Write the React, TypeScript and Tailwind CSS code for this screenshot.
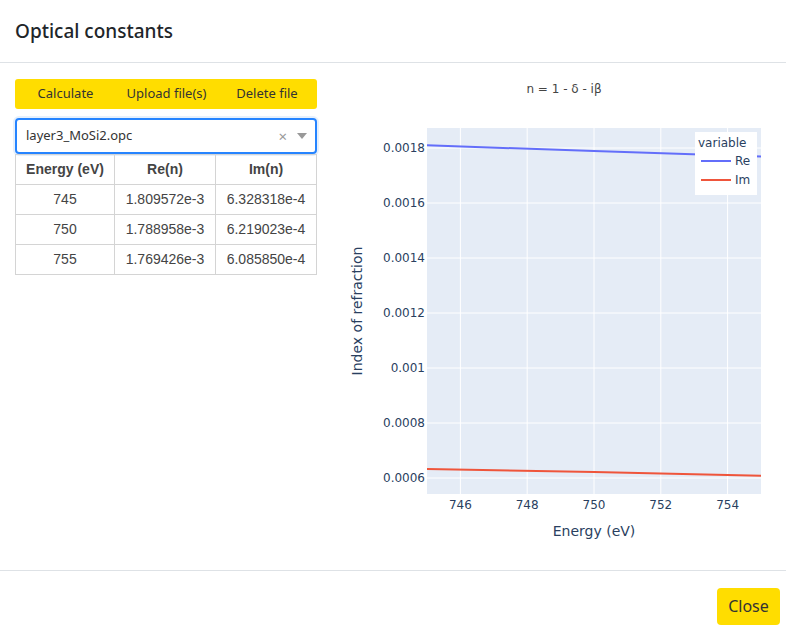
import React from 'react';

// ** data
const rows = [
  { energy: 745, re: '1.809572e-3', im: '6.328318e-4' },
  { energy: 750, re: '1.788958e-3', im: '6.219023e-4' },
  { energy: 755, re: '1.769426e-3', im: '6.085850e-4' },
];

const reVals = [1.809572e-3, 1.788958e-3, 1.769426e-3];
const imVals = [6.328318e-4, 6.219023e-4, 6.08585e-4];

// plot area in svg coordinates (svg sits at page x=330, y=63)
const PX0 = 97;
const PX1 = 431;
const PY0 = 65;
const PY1 = 431;

const xOf = (e: number) => PX0 + ((e - 745) / 10) * (PX1 - PX0);
const yOf = (v: number) => 415 - ((v - 0.0006) / 0.0001) * 27.5;

const Chart: React.FC = () => {
  const yTicks = [0.0018, 0.0016, 0.0014, 0.0012, 0.001, 0.0008, 0.0006];
  const xTicks = [746, 748, 750, 752, 754];
  const energies = [745, 750, 755];

  const line = (vals: number[]) => energies.map((e, i) => `${xOf(e)},${yOf(vals[i])}`).join(' ');

  return (
    <svg width={456} height={507} className="block" style={{ fontFamily: '"DejaVu Sans", Verdana, sans-serif' }}>
      <text x={234} y={30} textAnchor="middle" fontSize={12} fill="#444">
        n = 1 - δ - iβ
      </text>

      <rect x={PX0} y={PY0} width={PX1 - PX0} height={PY1 - PY0} fill="#e5ecf6" />

      {xTicks.map((t) => (
        <line key={t} x1={xOf(t)} x2={xOf(t)} y1={PY0} y2={PY1} stroke="#fff" strokeWidth={1} />
      ))}
      {yTicks.map((t) => (
        <line key={t} x1={PX0} x2={PX1} y1={yOf(t)} y2={yOf(t)} stroke="#fff" strokeWidth={1} />
      ))}

      <clipPath id="plot">
        <rect x={PX0} y={PY0} width={PX1 - PX0} height={PY1 - PY0} />
      </clipPath>
      <g clipPath="url(#plot)">
        <polyline points={line(reVals)} fill="none" stroke="#636efa" strokeWidth={2} />
        <polyline points={line(imVals)} fill="none" stroke="#ef553b" strokeWidth={2} />
      </g>

      {yTicks.map((t) => (
        <text key={t} x={PX0 - 2} y={yOf(t) + 4} textAnchor="end" fontSize={12} fill="#2a3f5f">
          {String(t)}
        </text>
      ))}
      {xTicks.map((t) => (
        <text key={t} x={xOf(t)} y={PY1 + 15} textAnchor="middle" fontSize={12} fill="#2a3f5f">
          {t}
        </text>
      ))}

      <text x={264} y={473} textAnchor="middle" fontSize={14} fill="#2a3f5f">
        Energy (eV)
      </text>
      <text x={32} y={248} textAnchor="middle" fontSize={14} fill="#2a3f5f" transform="rotate(-90 32 248)">
        Index of refraction
      </text>

      {/* legend */}
      <rect x={365} y={69} width={62} height={63} fill="#fff" />
      <text x={368} y={84} fontSize={12} fill="#2a3f5f">
        variable
      </text>
      <line x1={371} x2={401} y1={98} y2={98} stroke="#636efa" strokeWidth={2} />
      <text x={405} y={102} fontSize={12} fill="#2a3f5f">
        Re
      </text>
      <line x1={371} x2={401} y1={117} y2={117} stroke="#ef553b" strokeWidth={2} />
      <text x={405} y={121} fontSize={12} fill="#2a3f5f">
        Im
      </text>
    </svg>
  );
};

const App: React.FC = () => {
  return (
    <div className="w-[786px] h-[641px] bg-white flex flex-col text-[#212529]" style={{ fontFamily: '"Noto Sans", "Open Sans", sans-serif' }}>
      {/* header */}
      <div className="h-[63px] shrink-0 border-b border-[#dee2e6] flex items-center px-[15px]">
        <h5 className="text-[19px] font-medium leading-none">Optical constants</h5>
      </div>

      {/* body */}
      <div className="flex-1 flex">
        <div className="w-[330px] shrink-0 pl-[15px] pt-[16px]">
          <div className="w-[302px] h-[30px] bg-[#ffdd00] rounded-[3px] flex items-center text-[13px] text-[#333]">
            <button className="w-[101px] h-full">Calculate</button>
            <button className="w-[101px] h-full">Upload file(s)</button>
            <button className="w-[100px] h-full">Delete file</button>
          </div>

          <div className="mt-[9px] w-[302px] h-[36px] border-2 border-[#2684ff] rounded-[4px] flex items-center pl-[9px] pr-[8px] text-[13px] text-[#333] shadow-[0_0_0_2px_#e6f0fc]">
            <span className="flex-1">layer3_MoSi2.opc</span>
            <span className="text-[#999] text-[15px] leading-none mr-[10px]">×</span>
            <svg width={10} height={6} viewBox="0 0 10 6">
              <path d="M0 0h10L5 6z" fill="#999" />
            </svg>
          </div>

          <table className="w-[302px] border-collapse text-[14px] text-[#444] table-fixed" style={{ fontFamily: '"Liberation Sans", Arial, sans-serif' }}>
            <thead>
              <tr className="h-[30px]">
                <th className="w-[99px] border border-[#d4d4d4] font-bold">Energy (eV)</th>
                <th className="w-[101px] border border-[#d4d4d4] font-bold">Re(n)</th>
                <th className="border border-[#d4d4d4] font-bold">Im(n)</th>
              </tr>
            </thead>
            <tbody>
              {rows.map((r) => (
                <tr key={r.energy} className="h-[30px] text-center">
                  <td className="border border-[#d4d4d4]">{r.energy}</td>
                  <td className="border border-[#d4d4d4]">{r.re}</td>
                  <td className="border border-[#d4d4d4]">{r.im}</td>
                </tr>
              ))}
            </tbody>
          </table>
        </div>

        <Chart />
      </div>

      {/* footer */}
      <div className="h-[71px] shrink-0 border-t border-[#dee2e6] flex items-center justify-end pr-[6px]">
        <button className="h-[37px] w-[63px] bg-[#ffdd00] rounded-[4px] text-[16px] text-[#333]">Close</button>
      </div>
    </div>
  );
};

export default App;
